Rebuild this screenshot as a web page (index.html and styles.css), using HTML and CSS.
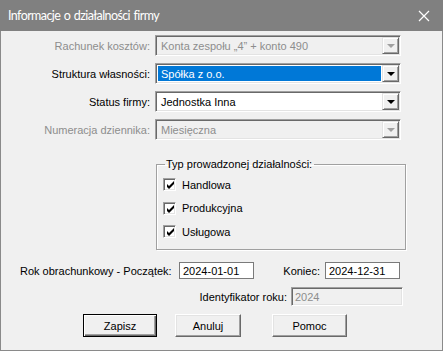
FILE: index.html
```html
<!DOCTYPE html>
<html lang="pl">
<head>
    <meta charset="UTF-8">
    <title>Informacje o działalności firmy</title>
    <link rel="stylesheet" href="styles.css">
</head>
<body>
    <div class="window">
        <div class="titlebar">
            <span class="title">Informacje o działalności firmy</span>
            <svg class="close" width="12" height="12" viewBox="0 0 12 12">
                <path d="M1 1 L11 11 M11 1 L1 11" stroke="#fff" stroke-width="1.2" fill="none"/>
            </svg>
        </div>

        <div class="content">
            <div class="fields">
                <label class="label disabled">Rachunek kosztów:</label>
                <div class="combo is-disabled">
                    <span class="combo-text">Konta zespołu „4” + konto 490</span>
                    <span class="combo-btn"><span class="arrow"></span></span>
                </div>

                <label class="label">Struktura własności:</label>
                <div class="combo">
                    <span class="combo-text selected">Spółka z o.o.</span>
                    <span class="combo-btn"><span class="arrow"></span></span>
                </div>

                <label class="label">Status firmy:</label>
                <div class="combo">
                    <span class="combo-text">Jednostka Inna</span>
                    <span class="combo-btn"><span class="arrow"></span></span>
                </div>

                <label class="label disabled">Numeracja dziennika:</label>
                <div class="combo is-disabled">
                    <span class="combo-text">Miesięczna</span>
                    <span class="combo-btn"><span class="arrow"></span></span>
                </div>
            </div>

            <fieldset class="group">
                <legend>Typ prowadzonej działalności:</legend>
                <div class="check"><span class="box"></span>Handlowa</div>
                <div class="check"><span class="box"></span>Produkcyjna</div>
                <div class="check"><span class="box"></span>Usługowa</div>
            </fieldset>

            <div class="year-row">
                <span class="year-label">Rok obrachunkowy - Początek:</span>
                <span class="textbox">2024-01-01</span>
                <span class="end-label">Koniec:</span>
                <span class="textbox">2024-12-31</span>
            </div>

            <div class="id-row">
                <span class="id-label">Identyfikator roku:</span>
                <span class="textbox readonly">2024</span>
            </div>

            <div class="buttons">
                <button class="btn btn-default">Zapisz</button>
                <button class="btn btn-cancel">Anuluj</button>
                <button class="btn btn-help">Pomoc</button>
            </div>
        </div>
    </div>
</body>
</html>
```

FILE: styles.css
```css
:root {
    --face: #f0f0f0;
    --shadow: #a0a0a0;
    --dark: #696969;
    --disabled-text: #8d8d8d;
    --select-blue: #0078d7;
}

* {
    box-sizing: border-box;
}

body {
    margin: 0;
    font-family: "Liberation Sans", Arial, sans-serif;
    font-size: 11px;
    color: #000;
    background: var(--face);
}

.window {
    width: 443px;
    height: 351px;
    background: var(--face);
    border: 1px solid #8a8a8a;
    border-top: none;
    display: flex;
    flex-direction: column;
}

.titlebar {
    height: 31px;
    margin: 0 -1px;
    background: #808080;
    display: flex;
    align-items: center;
    justify-content: space-between;
    padding: 0 13px 0 8px;
}

.title {
    font-family: Lato, sans-serif;
    font-size: 12.5px;
    letter-spacing: -0.6px;
    word-spacing: 1px;
    color: #fff;
}

.content {
    padding-top: 4px;
    white-space: nowrap;
}

/* combo rows */
.fields {
    display: grid;
    grid-template-columns: 150px 246px;
    column-gap: 4px;
    row-gap: 7px;
}

.label {
    text-align: right;
    align-self: center;
    padding-right: 1px;
}

.label.disabled {
    color: var(--disabled-text);
}

.combo {
    height: 21px;
    display: flex;
    background: #fff;
    border-top: 1px solid var(--shadow);
    border-left: 1px solid var(--shadow);
    border-right: 1px solid #fff;
    border-bottom: 1px solid #fff;
    box-shadow: inset 1px 1px 0 var(--dark), inset -1px -1px 0 #e3e3e3;
    padding: 1px;
}

.combo.is-disabled {
    background: var(--face);
    color: var(--disabled-text);
}

.combo-text {
    flex: 1;
    display: flex;
    align-items: center;
    padding-left: 3px;
    margin: 1px;
}

.combo-text.selected {
    background: var(--select-blue);
    color: #fff;
}

.combo-btn {
    width: 17px;
    background: var(--face);
    border-top: 1px solid #e3e3e3;
    border-left: 1px solid #e3e3e3;
    border-right: 1px solid var(--dark);
    border-bottom: 1px solid var(--dark);
    box-shadow: inset 1px 1px 0 #fff, inset -1px -1px 0 var(--shadow);
    display: flex;
    align-items: center;
    justify-content: center;
}

.arrow {
    width: 0;
    height: 0;
    border-left: 4px solid transparent;
    border-right: 4px solid transparent;
    border-top: 4px solid #000;
    margin-top: 1px;
}

.is-disabled .arrow {
    border-top-color: var(--shadow);
}

/* group box */
.group {
    margin: 17px 0 0 155px;
    width: 250px;
    height: 93px;
    padding: 2px 0 0 6px;
    border: 1px solid var(--shadow);
    box-shadow: inset 1px 1px 0 #fff, 1px 1px 0 #fff;
}

.group legend {
    padding: 0 2px 0 1px;
    margin-left: 2px;
    line-height: 14px;
}

.check {
    display: flex;
    align-items: center;
    height: 23.5px;
}

.box {
    width: 13px;
    height: 13px;
    margin-right: 6px;
    background: #fff url("data:image/svg+xml,%3Csvg xmlns='http://www.w3.org/2000/svg' width='13' height='13'%3E%3Cpath d='M3 5 L3 8 L5 10 L10 5 L10 2 L5 7 Z' fill='%23000'/%3E%3C/svg%3E") no-repeat;
    border-top: 1px solid var(--shadow);
    border-left: 1px solid var(--shadow);
    border-right: 1px solid #fff;
    border-bottom: 1px solid #fff;
    box-shadow: inset 1px 1px 0 var(--dark), inset -1px -1px 0 #e3e3e3;
}

/* year fields */
.year-row {
    display: flex;
    align-items: center;
    margin-top: 12px;
}

.year-label {
    width: 178px;
    padding-left: 19px;
}

.end-label {
    width: 71px;
    text-align: right;
    padding-right: 5px;
}

.textbox {
    width: 75px;
    height: 17px;
    background: #fff;
    border: 1px solid #7a7a7a;
    padding-left: 3px;
    display: flex;
    align-items: center;
}

.id-row {
    display: flex;
    align-items: center;
    margin-top: 8px;
}

.id-label {
    width: 290px;
    text-align: right;
    padding-right: 4px;
}

.textbox.readonly {
    width: 112px;
    height: 19px;
    background: var(--face);
    color: var(--disabled-text);
    border-top: 1px solid var(--shadow);
    border-left: 1px solid var(--shadow);
    border-right: 1px solid #fff;
    border-bottom: 1px solid #fff;
    box-shadow: inset 1px 1px 0 var(--dark), inset -1px -1px 0 #e3e3e3;
}

/* buttons */
.buttons {
    display: flex;
    margin-top: 8px;
    padding-left: 82px;
}

.btn {
    height: 23px;
    font: inherit;
    color: #000;
    background: var(--face);
    border-top: 1px solid #fff;
    border-left: 1px solid #fff;
    border-right: 1px solid var(--dark);
    border-bottom: 1px solid var(--dark);
    box-shadow: inset -1px -1px 0 var(--shadow), inset 1px 1px 0 #e3e3e3;
    padding: 0;
}

.btn-default {
    width: 74px;
    border: 1px solid #000;
    box-shadow: inset 1px 1px 0 #fff, inset -1px -1px 0 var(--dark), inset -2px -2px 0 var(--shadow);
}

.btn-cancel {
    width: 66px;
    margin-left: 18px;
}

.btn-help {
    width: 75px;
    margin-left: 31px;
}
```
